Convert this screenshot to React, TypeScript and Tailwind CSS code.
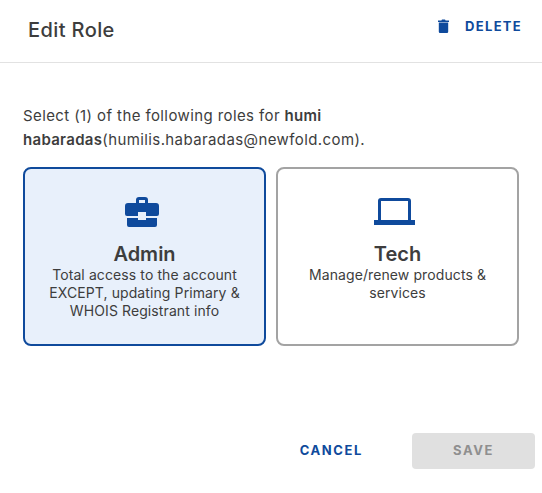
export default function App() {
  return (
    <div className="w-[542px] h-[493px] bg-white text-[#3d3d3d] font-['Inter',sans-serif] flex flex-col overflow-hidden">
      <header className="h-[63px] shrink-0 border-b border-[#e2e2e2] flex items-start justify-between pl-[28px] pr-[20px] pt-[16px]">
        <h1 className="text-[20px] leading-[28px] font-medium tracking-[0.4px]">Edit Role</h1>
        <button className="mt-[2px] h-[16px] flex items-center gap-[16px] text-[#0f4a9c] text-[13px] leading-[16px] font-bold tracking-[1.3px]">
          <svg width="11" height="14" viewBox="0 0 11 14" fill="currentColor"><path d="M0 1.6h3.4L4 .4h3l.6 1.2H11v1.5H0V1.6zM.8 3.6h9.4V12.8a1.2 1.2 0 0 1-1.2 1.2H2a1.2 1.2 0 0 1-1.2-1.2V3.6z" /></svg>
          DELETE
        </button>
      </header>
      <main className="flex-1 px-[23px] pt-[41px]">
        <p className="text-[15px] leading-[24px] tracking-[0.4px]">
          Select (1) of the following roles for <b className="font-semibold tracking-[0.3px]">humi habaradas</b>(humilis.habaradas@newfold.com).
        </p>
        <div className="mt-[15px] flex gap-[10px]">
          <div className="w-[243px] h-[179px] rounded-[8px] border-2 border-[#0f4a9c] bg-[#e8f0fb] flex flex-col items-center pt-[28px] text-center">
            <svg className="mr-[6px]" width="34" height="30" viewBox="0 0 34 30" fill="#0f4a9c" fillRule="evenodd"><path d="M11 6V3a3 3 0 0 1 3-3h6a3 3 0 0 1 3 3v3h8a3 3 0 0 1 3 3v8a2 2 0 0 1-2 2H21v-4h-8v4H2a2 2 0 0 1-2-2V9a3 3 0 0 1 3-3h8zm3-3v3h6V3h-6zM2 21h11v2h8v-2h11v7a2 2 0 0 1-2 2H4a2 2 0 0 1-2-2v-7z" /></svg>
            <div className="text-[20px] font-semibold mt-[15px] leading-[24px]">Admin</div>
            <div className="text-[14px] leading-[18px] w-[205px] tracking-[0.1px]">Total access to the account EXCEPT, updating Primary &amp; WHOIS Registrant info</div>
          </div>
          <div className="w-[243px] h-[179px] rounded-[8px] border-2 border-[#a3a3a3] bg-white flex flex-col items-center pt-[28px] text-center">
            <svg className="mr-[6px]" width="41" height="30" viewBox="0 0 41 30" fill="#0f4a9c" fillRule="evenodd"><path d="M7 1h27a3 3 0 0 1 3 3v19h4v5H0v-5h4V4a3 3 0 0 1 3-3zm0 3v19h27V4H7z" /></svg>
            <div className="text-[20px] font-semibold mt-[15px] leading-[24px]">Tech</div>
            <div className="text-[14px] leading-[18px] w-[205px] tracking-[0.1px]">Manage/renew products &amp; services</div>
          </div>
        </div>
      </main>
      <footer className="h-[60px] shrink-0 flex items-start justify-end gap-[49px] pr-[7px]">
        <button className="h-[36px] text-[#0f4a9c] text-[13px] font-bold tracking-[1.6px]">CANCEL</button>
        <button className="h-[36px] w-[123px] rounded-[4px] bg-[#e0e0e0] text-[#8f8f8f] text-[13px] font-bold tracking-[1.6px]">SAVE</button>
      </footer>
    </div>
  );
}
